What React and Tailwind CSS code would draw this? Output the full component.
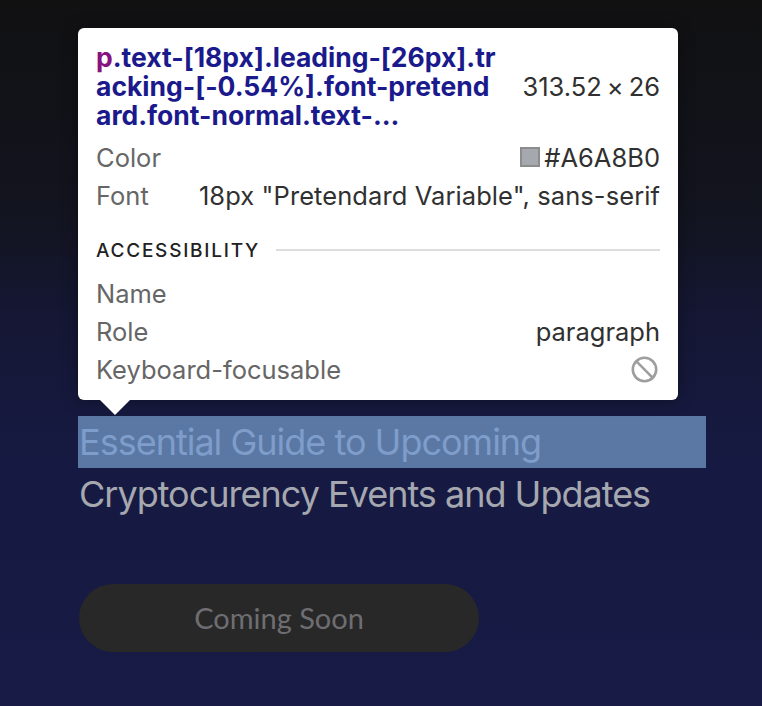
const Row = ({ label, children }) => (
  <div className="flex h-[38px] items-center justify-between">
    <span className="text-[#666666]">{label}</span>
    {children}
  </div>
);

export default function App() {
  return (
    <div className="relative h-[706px] w-[762px] overflow-hidden bg-[linear-gradient(to_bottom,#111112_0%,#12141f_30%,#151734_45%,#161a42_65%,#171b45_100%)] pl-[78px] pt-[416px] font-['Inter',sans-serif]">
      <div className="absolute left-[78px] top-[28px] h-[372px] w-[600px] rounded-[6px] bg-white px-[18px] pt-[15px] text-[25.5px] leading-[29px] text-[#303030] shadow-[0_0_16px_rgba(0,0,0,0.35)]">
        <div className="flex items-center justify-between">
          <div className="whitespace-nowrap text-[26.5px] font-bold leading-[29px] text-[#1a1a8c]">
            <span className="text-[#881280]">p</span>.text-[18px].leading-[26px].tr
            <br />
            acking-[-0.54%].font-pretend
            <br />
            ard.font-normal.text-...
          </div>
          <div className="flex items-center gap-[5px]">
            <span>313.52</span>
            <span>×</span>
            <span>26</span>
          </div>
        </div>
        <div className="mt-[8px]">
          <Row label="Color">
            <span className="flex items-center gap-[4px]">
              <span className="h-[20px] w-[20px] border-2 border-[#8c8c8c] bg-[#a6a8b0]" />
              #A6A8B0
            </span>
          </Row>
          <Row label="Font">
            <span className="tracking-[0.08px]">18px "Pretendard Variable", sans-serif</span>
          </Row>
        </div>
        <div className="mt-[24px] flex h-[24px] items-center gap-[16px]">
          <span className="text-[19px] font-medium tracking-[1.75px] text-[#222222]">ACCESSIBILITY</span>
          <span className="h-[2px] flex-1 bg-[#dddddd]" />
        </div>
        <div className="mt-[12px]">
          <Row label="Name" />
          <Row label="Role">
            <span>paragraph</span>
          </Row>
          <Row label="Keyboard-focusable">
            <svg className="mr-[2px]" width="27" height="27" viewBox="0 0 27 27" fill="none" stroke="#9e9e9e" strokeWidth="2.6">
              <circle cx="13.5" cy="13.5" r="11.7" />
              <path d="M5.2 5.2l16.6 16.6" />
            </svg>
          </Row>
        </div>
        <div className="absolute left-[22px] top-full h-0 w-0 border-x-[15px] border-t-[15px] border-x-transparent border-t-white" />
      </div>

      <div className="w-[628px] text-[36px] leading-[52px] tracking-[-1px] text-[#a6a8b0]">
        <p className="bg-[#5a78a3] pl-px text-[#7f9dcb]">Essential Guide to Upcoming</p>
        <p className="pl-px">Cryptocurency Events and Updates</p>
      </div>

      <button className="mt-[64px] ml-px flex h-[68px] w-[400px] items-center justify-center rounded-full bg-[#282828] font-['Lato',sans-serif] text-[29px] text-[#6e6e72]">
        Coming Soon
      </button>
    </div>
  );
}
